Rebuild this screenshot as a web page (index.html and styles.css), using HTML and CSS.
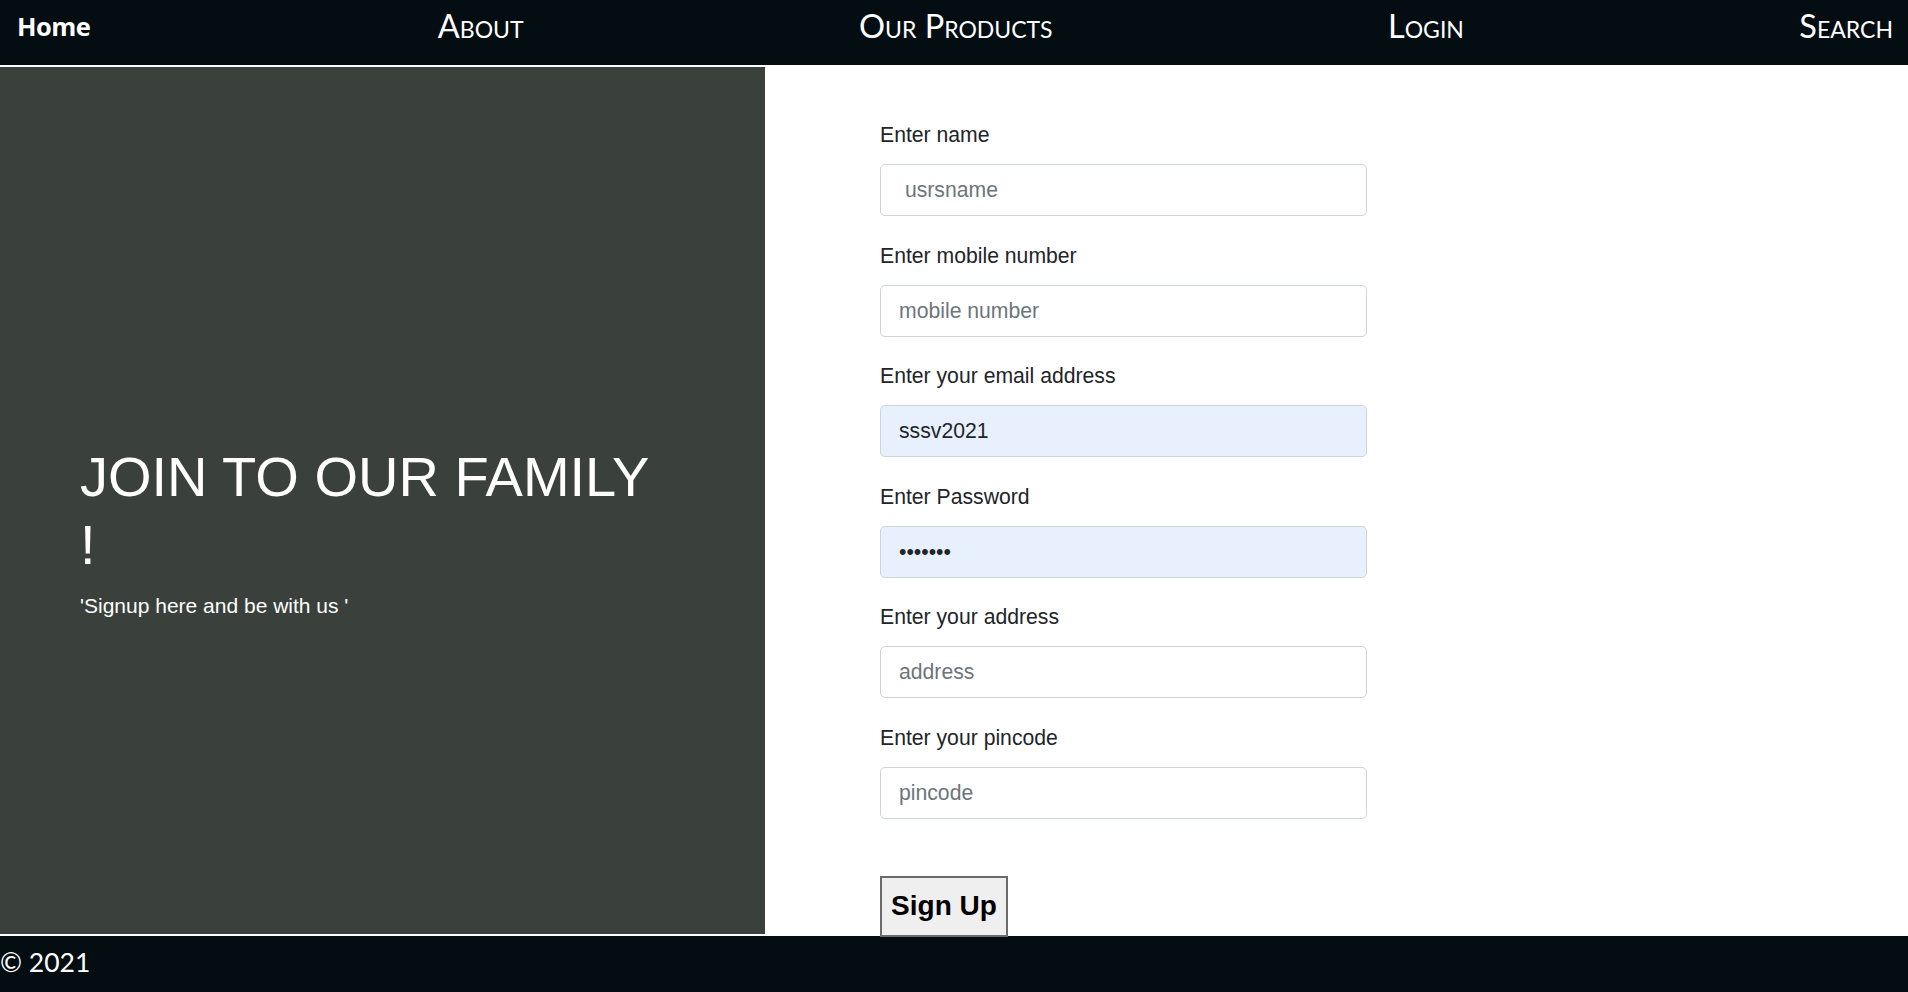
FILE: index.html
```html
<!DOCTYPE html>
<html lang="en">
<head>
<meta charset="utf-8">
<title>Sign Up</title>
<link rel="stylesheet" href="styles.css">
</head>
<body>
<header class="nav">
  <a class="nav-home" href="#">Home</a>
  <a class="nav-link" href="#">About</a>
  <a class="nav-link" href="#">Our Products</a>
  <a class="nav-link" href="#">Login</a>
  <a class="nav-link" href="#">Search</a>
</header>
<main class="main">
  <section class="hero">
    <h1 class="hero-title">JOIN TO OUR FAMILY !</h1>
    <p class="hero-sub">'Signup here and be with us '</p>
  </section>
  <section class="form-col">
    <form class="form">
      <div class="group">
        <label class="label">Enter name</label>
        <input class="field" type="text" placeholder=" usrsname">
      </div>
      <div class="group">
        <label class="label">Enter mobile number</label>
        <input class="field" type="text" placeholder="mobile number">
      </div>
      <div class="group">
        <label class="label">Enter your email address</label>
        <input class="field autofill" type="text" value="sssv2021">
      </div>
      <div class="group">
        <label class="label">Enter Password</label>
        <input class="field autofill" type="password" value="sssv202">
      </div>
      <div class="group">
        <label class="label">Enter your address</label>
        <input class="field" type="text" placeholder="address">
      </div>
      <div class="group">
        <label class="label">Enter your pincode</label>
        <input class="field" type="text" placeholder="pincode">
      </div>
      <button class="btn" type="button">Sign Up</button>
    </form>
  </section>
</main>
<footer class="footer">© 2021</footer>
</body>
</html>
```

FILE: styles.css
```css
* { box-sizing: border-box; }
html, body { margin: 0; padding: 0; }
body {
  width: 1908px;
  height: 992px;
  overflow: hidden;
  background: #ffffff;
  font-family: "Liberation Sans", Arial, sans-serif;
}
.nav {
  height: 65px;
  background: #040d12;
  display: flex;
  align-items: center;
  justify-content: space-between;
  padding: 0 15px 14px 17px;
}
.nav a { color: #ffffff; text-decoration: none; }
.nav-home {
  font-family: "Open Sans", sans-serif;
  font-weight: 700;
  font-size: 25.5px;
  letter-spacing: -0.5px;
}
.nav-link {
  font-family: Lato, sans-serif;
  font-variant: small-caps;
  font-size: 32.5px;
}
.nav-link:nth-child(2) { margin-left: 12px; }
.main {
  height: 871px;
  display: flex;
  align-items: flex-start;
}
.hero {
  width: 765px;
  height: 867px;
  margin-top: 2px;
  background: #3a413d;
  color: #ffffff;
  padding: 376px 80px 0 80px;
}
.hero-title {
  margin: 0;
  width: 580px;
  font-weight: 400;
  font-size: 56px;
  line-height: 68px;
}
.hero-sub {
  margin: 12px 0 0 0;
  font-size: 21px;
  line-height: 30px;
}
.form-col {
  flex: 1;
  padding: 55px 0 0 115px;
}
.form { width: 487px; }
.group { margin-bottom: 24.5px; }
.label {
  display: block;
  font-size: 21.2px;
  line-height: 30px;
  color: #212529;
  margin-bottom: 14px;
}
.field {
  display: block;
  width: 487px;
  height: 52px;
  padding: 0 18px;
  font-family: "Liberation Sans", Arial, sans-serif;
  font-size: 21.2px;
  color: #212529;
  background: #ffffff;
  border: 1px solid #ced4da;
  border-radius: 5px;
  outline: none;
}
.field::placeholder { color: #6c757d; opacity: 1; }
.field.autofill { background: #e8f0fe; }
.btn {
  display: block;
  margin-top: 57px;
  width: 128px;
  height: 61px;
  padding: 0;
  font-family: "Liberation Sans", Arial, sans-serif;
  font-weight: 700;
  font-size: 28px;
  color: #000000;
  background: #efefef;
  border: 2px solid #6b6b6b;
  border-radius: 0;
}
.footer {
  height: 56px;
  background: #040d12;
  color: #ffffff;
  font-family: Lato, sans-serif;
  font-size: 26.5px;
  line-height: 52px;
}
```
